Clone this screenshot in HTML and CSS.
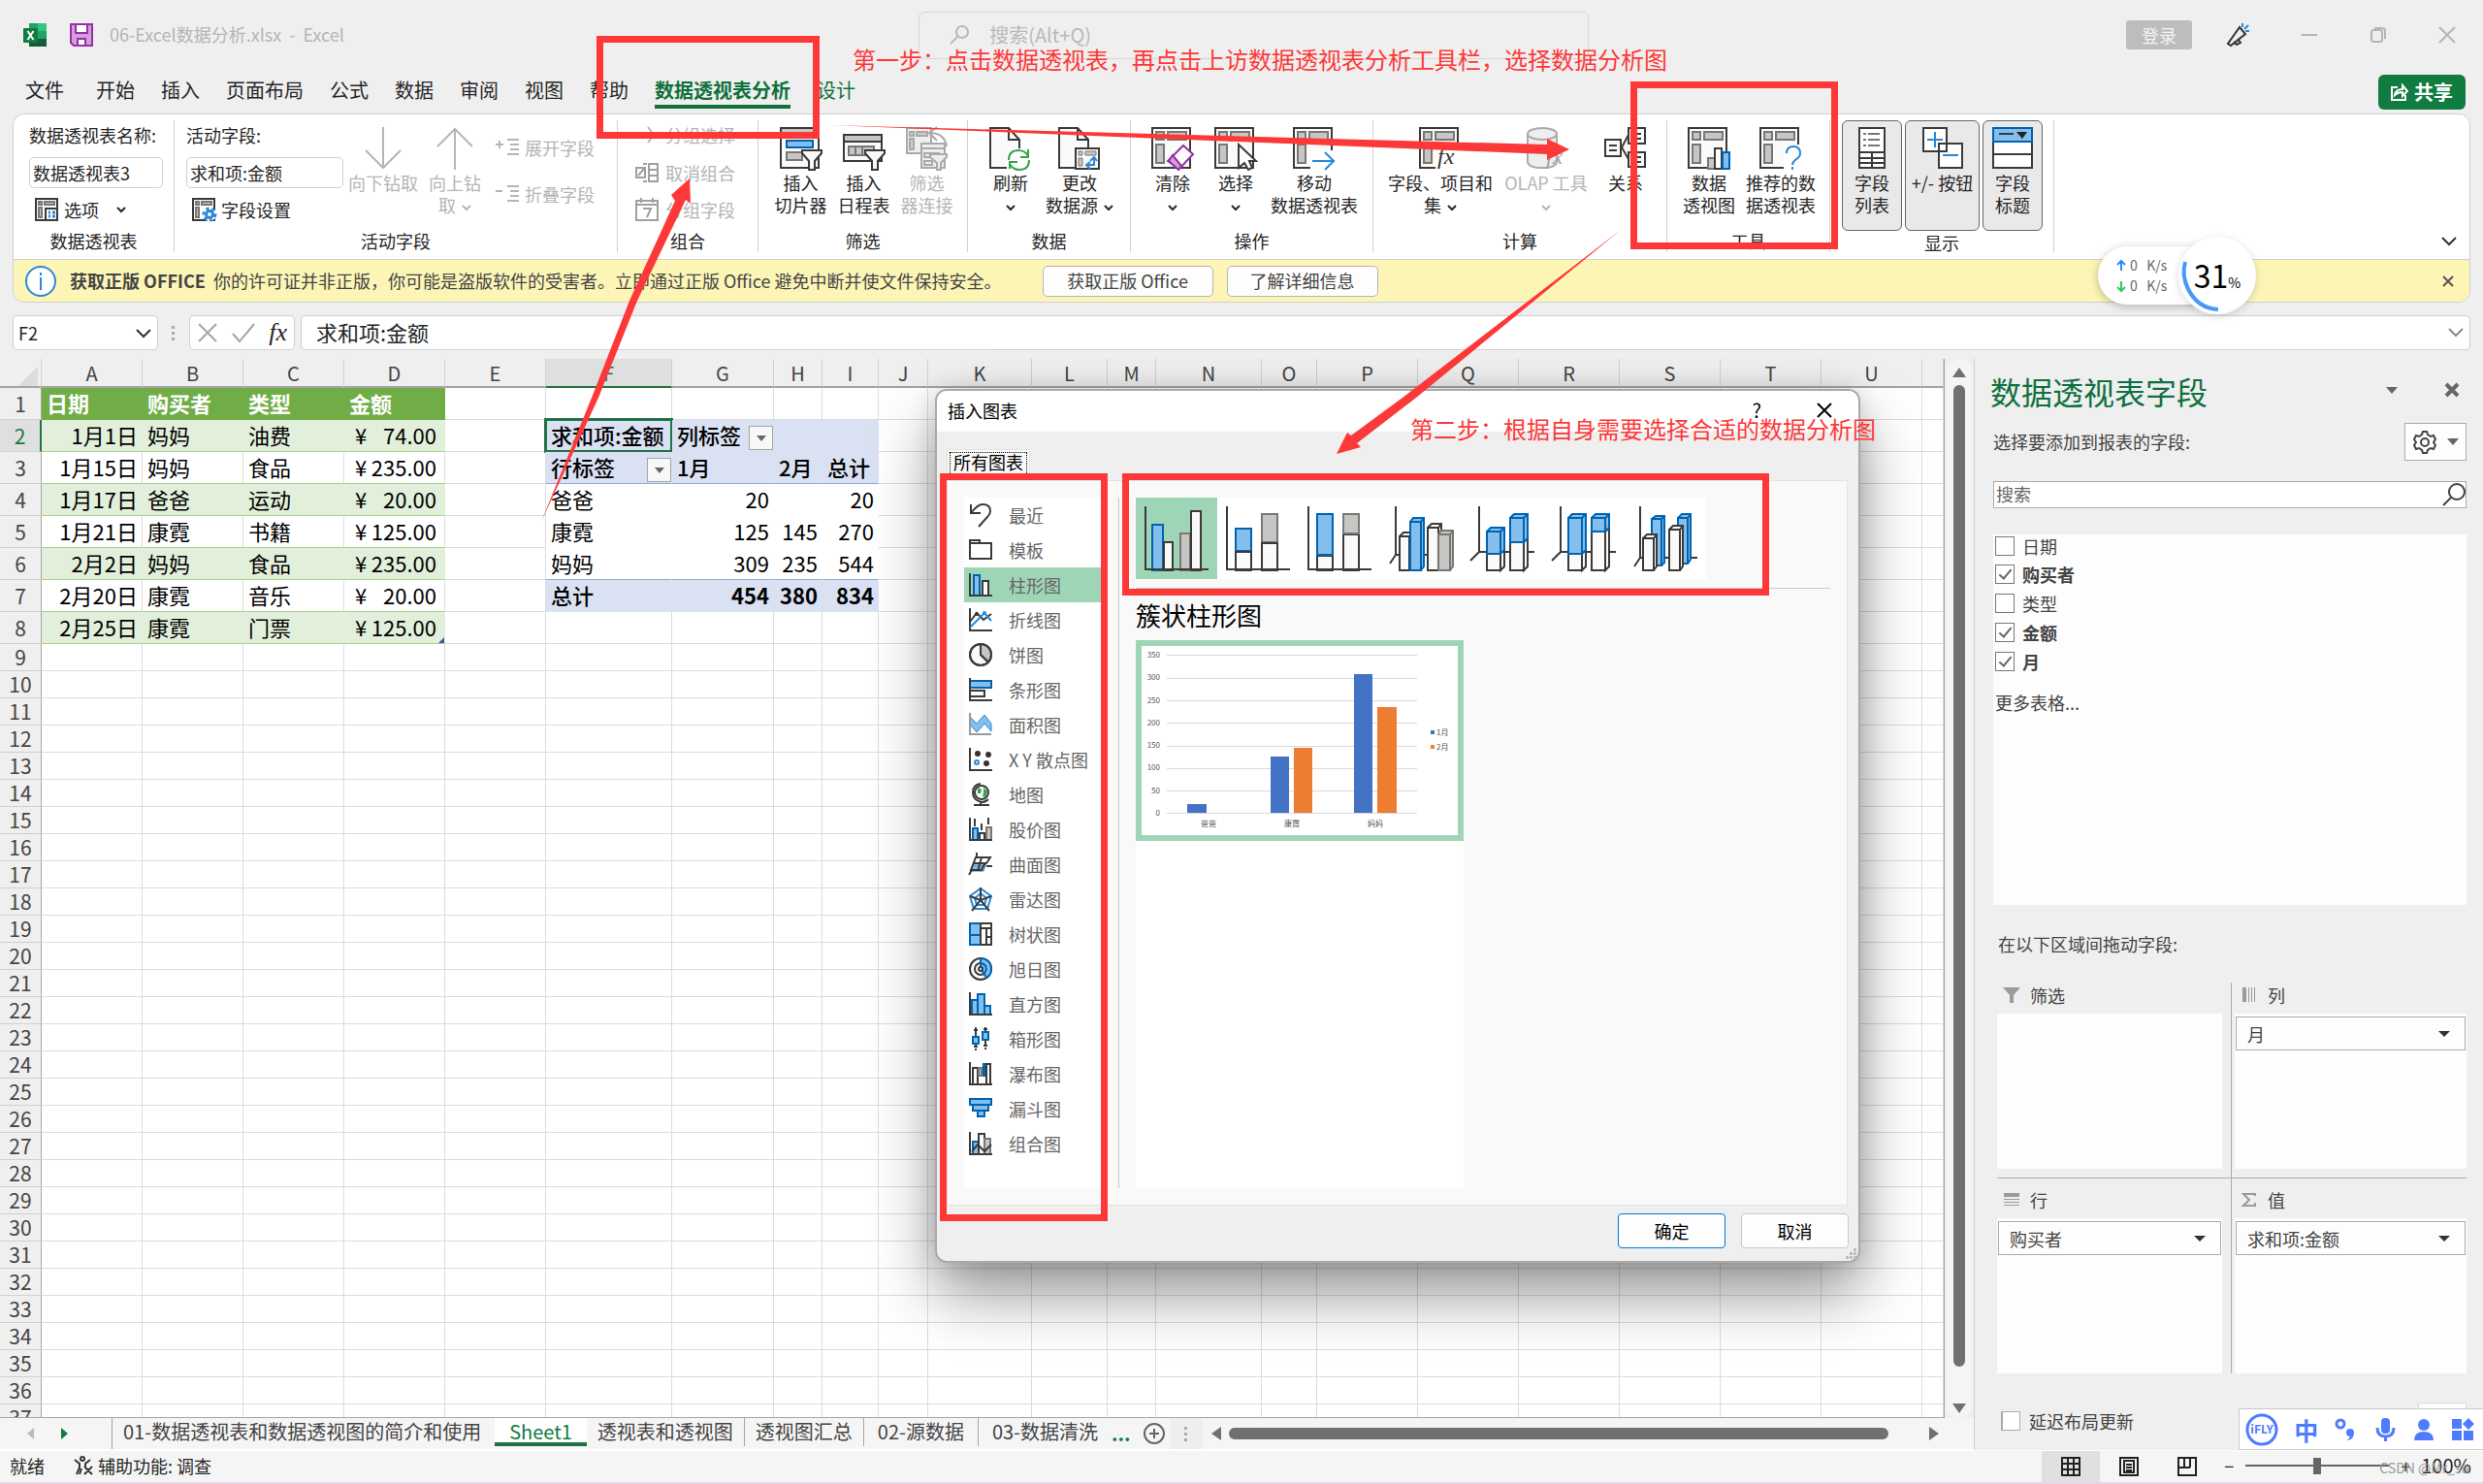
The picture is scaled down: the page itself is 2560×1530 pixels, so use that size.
FILE: index.html
```html
<!DOCTYPE html>
<html lang="zh-CN">
<head>
<meta charset="utf-8">
<title>06-Excel数据分析.xlsx - Excel</title>
<link rel="stylesheet" href="styles.css">
</head>
<body>
<svg class="defs" aria-hidden="true">
  <symbol id="pivot" viewBox="0 0 44 44"><path d="M1 1h39v41H1z" fill="#fafafa" stroke="#3b3a39" stroke-width="2"/><path d="M5 5h8v8H5zM17 5h19v8H17zM5 18h8v19H5z" fill="#c8c6c4" stroke="#797774" stroke-width="2"/></symbol>
  <symbol id="chev" viewBox="0 0 10 10"><path d="M1 3l4 4 4-4" fill="none" stroke="currentColor" stroke-width="2"/></symbol>
  <symbol id="page" viewBox="0 0 44 44"><path d="M1 1h19l11 12v29H1z" fill="#fafafa" stroke="#3b3a39" stroke-width="2"/><path d="M20 1v12h11" fill="none" stroke="#3b3a39" stroke-width="2"/></symbol>
</svg>

<header class="titlebar">
  <svg class="i24" viewBox="0 0 24 24"><path d="M6 0h18v24H6z" fill="#21a366"/><path d="M15 0h9v8h-9z" fill="#33c481"/><path d="M6 8h9v8H6z" fill="#107c41"/><path d="M6 16h18v8H6z" fill="#185c37"/><rect y="5" width="15" height="15" rx="1" fill="#107c41"/><path d="M4.500 8l6 9M10.500 8l-6 9" stroke="#fff" stroke-width="2"/></svg>
  <svg class="i24 save" viewBox="0 0 24 24"><path d="M1 1h22v22H4l-3-3z" fill="#d59dde" stroke="#9332a3" stroke-width="2"/><path d="M6 1h12v9H6zM8 16h8v7H8z" fill="#fff" stroke="#9332a3" stroke-width="2"/></svg>
  <span class="doc-name">06-Excel数据分析.xlsx &nbsp;- &nbsp;Excel</span>
  <label class="top-search"><svg class="i20" viewBox="0 0 20 20" fill="none" stroke="#b9b9b9" stroke-width="2"><circle cx="13" cy="7" r="6"/><path d="M9 11l-8 8"/></svg><input type="text" placeholder="搜索(Alt+Q)" aria-label="搜索"></label>
  <div class="window-tools">
    <button class="login">登录</button>
    <button class="plain" aria-label="即将推出"><svg class="i24" viewBox="0 0 24 24" fill="none" stroke="#333" stroke-width="2"><path d="M14 4l-12 17 3 2 15-12zM12 16l3 4 -4 2-3-3"/><path d="M17 4V0M19 6l4-4M20 8h4" stroke="#2b88d8"/></svg></button>
    <button class="plain" aria-label="最小化"><svg class="i18" viewBox="0 0 18 18" stroke="#b5b5b5" stroke-width="2"><path d="M1 9h16"/></svg></button>
    <button class="plain" aria-label="还原"><svg class="i18" viewBox="0 0 18 18" fill="none" stroke="#b5b5b5" stroke-width="2"><rect x="2" y="4" width="11" height="12" rx="2"/><path d="M5 2h8q3 0 3 3v8"/></svg></button>
    <button class="plain" aria-label="关闭"><svg class="i18" viewBox="0 0 18 18" stroke="#b5b5b5" stroke-width="2"><path d="M1 1l16 16M17 1L1 17"/></svg></button>
  </div>
</header>

<nav class="tabs">
  <a href="#">文件</a><a href="#">开始</a><a href="#">插入</a><a href="#">页面布局</a><a href="#">公式</a><a href="#">数据</a><a href="#">审阅</a><a href="#">视图</a><a href="#">帮助</a><a href="#" class="active">数据透视表分析</a><a href="#" class="context">设计</a>
  <button class="share"><svg class="i18" viewBox="0 0 18 18" fill="none" stroke="#fff" stroke-width="2"><path d="M7 4H1v13h14v-5M4 12q1-6 8-6V2l5 6-5 5V9Q7 9 4 12z"/></svg>共享</button>
</nav>

<section class="ribbon">
  <div class="groups">
    <div class="group g-name">
      <div class="tools stack">
        <label for="ptname">数据透视表名称:</label>
        <input id="ptname" type="text" value="数据透视表3">
        <button class="small"><svg class="i24" viewBox="0 0 24 24" fill="#fafafa" stroke="#3b3a39" stroke-width="2"><path d="M1 1h22v22H1z"/><path d="M4 4h3v3H4zM10 4h10v3H10zM4 10h3v10H4z" fill="#c8c6c4" stroke="#797774"/><path d="M11 11h12v12H11z"/><path d="M14 15h2M18 15h3M14 19h2M18 19h3" stroke="#2b88d8" stroke-width="3"/></svg>选项<svg class="chev gap"><use href="#chev"/></svg></button>
      </div>
      <div class="caption">数据透视表</div>
    </div>
    <div class="group g-active">
      <div class="tools">
        <div class="stack field">
          <label for="actfield">活动字段:</label>
          <input id="actfield" type="text" value="求和项:金额">
          <button class="small"><svg class="i24" viewBox="0 0 24 24" fill="#fafafa" stroke="#3b3a39" stroke-width="2"><path d="M1 1h22v22H1z"/><path d="M4 4h3v3H4zM10 4h10v3H10zM4 10h3v10H4z" fill="#c8c6c4" stroke="#797774"/><circle cx="18" cy="17" r="6" fill="#2b88d8" stroke="#fff"/><circle cx="18" cy="17" r="6" fill="none" stroke="#2b88d8" stroke-width="3" stroke-dasharray="3 3"/><circle cx="18" cy="17" r="2" fill="#fff" stroke="none"/></svg>字段设置</button>
        </div>
        <button class="big w74" disabled><svg class="i42" viewBox="0 0 44 44" fill="none" stroke="#b5b5b5" stroke-width="2"><path d="M22 0v42M4 24l18 18 18-18"/></svg><span>向下钻取</span></button>
        <button class="big w74" disabled><svg class="i42" viewBox="0 0 44 44" fill="none" stroke="#b5b5b5" stroke-width="2"><path d="M22 44V2M4 20L22 2l18 18"/></svg><span>向上钻<br>取<svg class="chev"><use href="#chev"/></svg></span></button>
        <div class="expand">
          <button class="small" disabled><svg class="i24" viewBox="0 0 24 24" stroke="#b5b5b5" stroke-width="2"><path d="M0 9h8M4 5v8M12 4h12M15 9h9M15 14h9M12 19h12"/></svg>展开字段</button>
          <button class="small" disabled><svg class="i24" viewBox="0 0 24 24" stroke="#b5b5b5" stroke-width="2"><path d="M0 9h7M12 4h12M15 9h9M15 14h9M12 19h12"/></svg>折叠字段</button>
        </div>
      </div>
      <div class="caption">活动字段</div>
    </div>
    <div class="group g-comb">
      <div class="tools stack">
        <button class="small" disabled><svg class="i24" viewBox="0 0 24 24" fill="none" stroke="#b5b5b5" stroke-width="2"><path d="M13 4l6 8-6 8"/></svg>分组选择</button>
        <button class="small" disabled><svg class="i24" viewBox="0 0 24 24" fill="none" stroke="#a0a0a0" stroke-width="2"><path d="M1 7h9v10H1zM3 15l6-7M8 3h4M8 21h4M14 3h9v18h-9zM14 9h9M14 15h9"/></svg>取消组合</button>
        <button class="small" disabled><svg class="i24" viewBox="0 0 24 24" fill="none" stroke="#a0a0a0" stroke-width="2"><path d="M1 3h22v20H1zM1 7h22M6 0v5M18 0v5M8 11h8l-4 9"/></svg>分组字段</button>
      </div>
      <div class="caption">组合</div>
    </div>
    <div class="group g-filter">
      <div class="tools">
        <button class="big w65"><svg class="i42" viewBox="0 0 44 44" fill="#fafafa" stroke="#3b3a39" stroke-width="2"><path d="M1 1h39v41H1z"/><path d="M2 2h37v7H2z" fill="#c8c6c4" stroke="none"/><path d="M1 10h39"/><path d="M7 14h27v7H7z" fill="#83beec" stroke="#0063b1"/><path d="M7 26h16v8H7z" fill="#c8c6c4" stroke="#797774"/><path d="M23 24h20v3l-7 8v9h-6v-9l-7-8z"/></svg><span>插入<br>切片器</span></button>
        <button class="big w65"><svg class="i42" viewBox="0 0 44 44" fill="#fafafa" stroke="#3b3a39" stroke-width="2"><path d="M1 8h39v27H1z"/><path d="M2 9h37v5H2z" fill="#c8c6c4" stroke="none"/><path d="M1 15h39"/><path d="M6 20h7v9H6zM13 20h7v9h-7zM20 20h12v9H20z" fill="#c8c6c4" stroke="#797774"/><path d="M23 24h20v3l-7 8v9h-6v-9l-7-8z"/></svg><span>插入<br>日程表</span></button>
        <button class="big w65" disabled><svg class="i42" viewBox="0 0 44 44" fill="#eee" stroke="#a9a9a9" stroke-width="2"><path d="M1 1h25v26H1z"/><path d="M4 5h4v4H4zM11 5h11v4H11zM4 12h4v11H4z" fill="#ccc"/><path d="M24 6q16 0 18 14M32 0l-8 6 8 8" fill="none"/><path d="M16 17h24v25H16zM16 22h24M19 27h15v4H19zM19 35h8v4h-8z"/><path d="M25 28h17v3l-6 6v7h-4v-7l-7-6z"/></svg><span>筛选<br>器连接</span></button>
      </div>
      <div class="caption">筛选</div>
    </div>
    <div class="group g-data">
      <div class="tools">
        <button class="big w66"><svg class="i42" viewBox="0 0 44 44"><use href="#page"/><path d="M18 22h26v22H18z" fill="#fff"/><path d="M20 34q0-10 10-10 7 0 10 6M40 23v8h-8M41 34q0 10-10 10-7 0-10-6M21 43v-7h8" fill="none" stroke="#37a24b" stroke-width="2"/></svg><span>刷新<br><svg class="chev solo"><use href="#chev"/></svg></span></button>
        <button class="big w76"><svg class="i42" viewBox="0 0 44 44"><use href="#page"/><path d="M18 22h24v21H18z" fill="#fafafa" stroke="#3b3a39" stroke-width="2"/><path d="M21 25h4v4h-4zM28 25h11v4H28zM21 32h4v8h-4z" fill="#c8c6c4" stroke="#797774"/><path d="M30 39h7v-7M33 35l4-4 3 4M33 36l-4 3 4 4" fill="none" stroke="#2b88d8" stroke-width="2"/></svg><span>更改<br>数据源<svg class="chev"><use href="#chev"/></svg></span></button>
      </div>
      <div class="caption">数据</div>
    </div>
    <div class="group g-op">
      <div class="tools">
        <button class="big w64"><svg class="i42" viewBox="0 0 44 44"><use href="#pivot"/><path d="M33 19l10 9-14 15-12-8z" fill="#fff" stroke="#9332a3" stroke-width="2"/><path d="M22 29l9 11-3 4-10-9z" fill="#d59dde" stroke="#9332a3" stroke-width="2"/></svg><span>清除<br><svg class="chev solo"><use href="#chev"/></svg></span></button>
        <button class="big w66"><svg class="i42" viewBox="0 0 44 44"><use href="#pivot"/><path d="M25 18v24l6-5 4 7 4-2-3-7h7z" fill="#fff" stroke="#3b3a39" stroke-width="2"/></svg><span>选择<br><svg class="chev solo"><use href="#chev"/></svg></span></button>
        <button class="big w96"><svg class="i42" viewBox="0 0 44 44"><use href="#pivot"/><path d="M18 24h26v20H18z" fill="#fff"/><path d="M20 35h23M33 26l9 9-9 9" fill="none" stroke="#2b88d8" stroke-width="2"/></svg><span>移动<br>数据透视表</span></button>
      </div>
      <div class="caption">操作</div>
    </div>
    <div class="group g-calc">
      <div class="tools">
        <button class="big w116"><svg class="i42" viewBox="0 0 44 44"><use href="#pivot"/><path d="M17 24h27v20H17z" fill="#fff"/><text x="19" y="38" class="fx">fx</text></svg><span>字段、项目和<br>集<svg class="chev"><use href="#chev"/></svg></span></button>
        <button class="big w102" disabled><svg class="i42" viewBox="0 0 44 44" fill="#eee" stroke="#a9a9a9" stroke-width="2"><path d="M3 7v28q0 7 15 7t15-7V7"/><ellipse cx="18" cy="7" rx="15" ry="6"/><text x="22" y="38" class="fx dim">fx</text></svg><span>OLAP 工具<br><svg class="chev solo"><use href="#chev"/></svg></span></button>
        <button class="big w62"><svg class="i42" viewBox="0 0 44 44" fill="#fafafa" stroke="#3b3a39" stroke-width="2"><path d="M1 13h16v17H1zM25 1h17v16H25zM25 26h17v15H25zM5 19h8M5 24h8M29 7h9M29 12h9M29 31h9M29 36h9M25 8l-7 13 7 12" /></svg><span>关系</span></button>
      </div>
      <div class="caption">计算</div>
    </div>
    <div class="group g-tool">
      <div class="tools">
        <button class="big w66"><svg class="i42" viewBox="0 0 44 44"><use href="#pivot"/><path d="M21 32h7v11h-7z" fill="#c8c6c4" stroke="#797774" stroke-width="2"/><path d="M28 22h7v21h-7z" fill="#fff" stroke="#3b3a39" stroke-width="2"/><path d="M36 26h7v17h-7z" fill="#83beec" stroke="#0063b1" stroke-width="2"/></svg><span>数据<br>透视图</span></button>
        <button class="big w82"><svg class="i42" viewBox="0 0 44 44"><use href="#pivot"/><path d="M25 18h19v26H25z" fill="#fff"/><path d="M28 27q0-7 7-7 7 0 7 7 0 4-4 6-4 3-4 6M34 41v3" fill="none" stroke="#2b88d8" stroke-width="2"/></svg><span>推荐的数<br>据透视表</span></button>
      </div>
      <div class="caption">工具</div>
    </div>
    <div class="group g-show">
      <div class="tools">
        <button class="big toggle w62" aria-pressed="true"><svg class="i42" viewBox="0 0 44 44" fill="#fff" stroke="#3b3a39" stroke-width="2"><path d="M9 1h26v41H9zM9 26h26M9 32h26M9 37h26M22 26v16"/><path d="M13 7h3M18 7h12M13 13h3M18 13h12M13 19h3M18 19h12" stroke="#797774"/></svg><span>字段<br>列表</span></button>
        <button class="big toggle w77" aria-pressed="true"><svg class="i42" viewBox="0 0 44 44" fill="#fff" stroke="#3b3a39" stroke-width="2"><path d="M2 1h24v24H2zM18 17h24v25H18z"/><path d="M6 13h16M14 5v16M22 29h16" stroke="#2b88d8"/></svg><span>+/- 按钮</span></button>
        <button class="big toggle w62" aria-pressed="true"><svg class="i42" viewBox="0 0 44 44" fill="#fff" stroke="#3b3a39" stroke-width="2"><path d="M2 15h40v27H2zM2 28h40"/><path d="M2 1h40v14H2z" fill="#83beec" stroke="#0063b1"/><path d="M8 7h15"/><path d="M26 5h11l-5 7z" fill="#222" stroke="none"/></svg><span>字段<br>标题</span></button>
      </div>
      <div class="caption">显示</div>
    </div>
    <button class="collapse" aria-label="折叠功能区"><svg class="i18" viewBox="0 0 18 18" fill="none" stroke="#333" stroke-width="2"><path d="M2 6l7 7 7-7"/></svg></button>
  </div>
  <div class="notice">
    <svg class="i32" viewBox="0 0 32 32" fill="#fff" stroke="#2b88d8" stroke-width="2"><circle cx="16" cy="16" r="15"/><path d="M16 12v13M16 7v3"/></svg>
    <span><b>获取正版 OFFICE</b>&nbsp; 你的许可证并非正版，你可能是盗版软件的受害者。立即通过正版 Office 避免中断并使文件保持安全。</span>
    <button class="get">获取正版 Office</button>
    <button class="more">了解详细信息</button>
    <button class="plain close" aria-label="关闭"><svg class="i12" viewBox="0 0 12 12" stroke="#555" stroke-width="2"><path d="M1 1l10 10M11 1L1 11"/></svg></button>
  </div>
</section>

<section class="formula-row">
  <div class="name-box"><input type="text" value="F2" aria-label="名称框"><svg class="i18" viewBox="0 0 18 18" fill="none" stroke="#333" stroke-width="2"><path d="M2 6l7 7 7-7"/></svg></div>
  <span class="dots"></span>
  <div class="fx-box"><svg class="i20" viewBox="0 0 20 20" stroke="#a5a5a5" stroke-width="2"><path d="M1 1l18 18M19 1L1 19"/></svg><svg class="i24" viewBox="0 0 24 24" fill="none" stroke="#a5a5a5" stroke-width="2"><path d="M1 13l7 8L23 3"/></svg><i>fx</i></div>
  <div class="formula"><input type="text" value="求和项:金额" aria-label="编辑栏"><svg class="i18" viewBox="0 0 18 18" fill="none" stroke="#888" stroke-width="2"><path d="M2 6l7 7 7-7"/></svg></div>
</section>

<main class="work">
  <section class="book">
    <div class="grid-row">
      <div class="sheet"><table id="grid"></table></div>
      <div class="vscroll"><i class="up"></i><i class="thumb"></i><i class="down"></i></div>
    </div>
    <div class="sheet-bar">
      <i class="prev"></i><i class="next"></i>
      <nav class="sheets"><a href="#">01-数据透视表和数据透视图的简介和使用</a><a href="#" class="current">Sheet1</a><a href="#">透视表和透视图</a><a href="#">透视图汇总</a><a href="#" class="wide">02-源数据</a><a href="#" class="wide">03-数据清洗</a></nav>
      <b class="more-sheets">...</b>
      <button class="plain" aria-label="新工作表"><svg class="i24" viewBox="0 0 24 24" fill="none" stroke="#666" stroke-width="2"><circle cx="12" cy="12" r="10"/><path d="M12 7v10M7 12h10"/></svg></button>
      <span class="splitter"><i class="dots"></i></span>
      <div class="hscroll"><i class="left"></i><i class="thumb"></i><i class="right"></i></div>
    </div>
  </section>

  <aside class="pane">
    <div class="pane-head"><h2>数据透视表字段</h2><i class="tri"></i><button class="plain" aria-label="关闭窗格"><svg class="i16" viewBox="0 0 16 16" stroke="#666" stroke-width="4"><path d="M2 2l12 12M14 2L2 14"/></svg></button></div>
    <div class="pane-pick"><span>选择要添加到报表的字段:</span><button class="gear" aria-label="工具"><svg class="i24" viewBox="0 0 24 24" fill="none" stroke="#444" stroke-width="2"><path d="M9 4l1-3h4l1 3 3 2 3-1 2 4-2 3 2 3-2 4-3-1-3 2-1 3h-4l-1-3-3-2-3 1-2-4 2-3-2-3 2-4 3 1z"/><circle cx="12" cy="12" r="4"/></svg><i class="tri"></i></button></div>
    <label class="pane-search"><input type="text" placeholder="搜索" aria-label="搜索字段"><svg class="i24" viewBox="0 0 24 24" fill="none" stroke="#444" stroke-width="2"><circle cx="15" cy="9" r="8"/><path d="M9 15l-8 8"/></svg></label>
    <div class="fields">
      <label><input type="checkbox">日期</label>
      <label class="on"><input type="checkbox" checked>购买者</label>
      <label><input type="checkbox">类型</label>
      <label class="on"><input type="checkbox" checked>金额</label>
      <label class="on"><input type="checkbox" checked>月</label>
      <a href="#">更多表格...</a>
    </div>
    <p class="drag-hint">在以下区域间拖动字段:</p>
    <div class="areas">
      <div class="area"><h3><svg class="i20" viewBox="0 0 20 20" fill="#9b9b9b"><path d="M1 2h18l-7 8v8H8v-8z"/></svg>筛选</h3><div class="drop"></div></div>
      <div class="area right"><h3><svg class="i16" viewBox="0 0 16 16" fill="#9b9b9b"><path d="M1 0h4v15H1zM7 0h1v15H7zM10 0h1v15h-1zM13 0h1v15h-1z"/></svg>列</h3><div class="drop"><select aria-label="列"><option>月</option></select></div></div>
      <div class="area lower"><h3><svg class="i20" viewBox="0 0 20 20" fill="#9b9b9b"><path d="M2 3h16v4H2zM2 9h16v1H2zM2 12h16v1H2zM2 15h16v1H2z"/></svg>行</h3><div class="drop"><select aria-label="行"><option>购买者</option></select></div></div>
      <div class="area right lower"><h3><svg class="i16" viewBox="0 0 16 16" fill="none" stroke="#9b9b9b" stroke-width="2"><path d="M14 4V2H2l6 6-6 6h12v-3"/></svg>值</h3><div class="drop"><select aria-label="值"><option>求和项:金额</option></select></div></div>
    </div>
    <div class="defer"><label><input type="checkbox">延迟布局更新</label><button aria-label="更新"></button></div>
  </aside>
</main>

<footer class="status">
  <span>就绪</span>
  <svg class="i20 access" viewBox="0 0 20 20" fill="none" stroke="#333" stroke-width="2"><circle cx="9" cy="3" r="2"/><path d="M1 4l5 4v4l-3 7M17 4l-5 4v3M8 13l-2 6M11 11l8 8M19 11l-8 8"/></svg>
  <span>辅助功能: 调查</span>
  <div class="views">
    <button class="sel" aria-label="普通"><svg class="i20" viewBox="0 0 20 20" fill="none" stroke="#222" stroke-width="2"><path d="M1 1h18v18H1zM1 7h18M1 13h18M7 1v18M13 1v18"/></svg></button>
    <button aria-label="页面布局"><svg class="i20" viewBox="0 0 20 20" fill="none" stroke="#222" stroke-width="2"><path d="M1 1h18v18H1zM5 4h10v12H5zM7 8h6M7 11h6M7 14h6"/></svg></button>
    <button aria-label="分页预览"><svg class="i20" viewBox="0 0 20 20" fill="none" stroke="#222" stroke-width="2"><path d="M1 1h18v18H1zM7 1v10M13 1v10M1 11h12"/></svg></button>
  </div>
  <span class="zoom-sign">−</span><input class="zoom" type="range" min="10" max="190" value="100" aria-label="缩放"><span class="zoom-sign">+</span><span class="pct">100%</span>
</footer>

<section class="dialog" role="dialog" aria-label="插入图表">
  <div class="dlg-title"><span>插入图表</span><span class="help">?</span><svg class="i16" viewBox="0 0 16 16" stroke="#000" stroke-width="2"><path d="M1 1l14 14M15 1L1 15"/></svg></div>
  <div class="dlg-tab"><button>所有图表</button></div>
  <div class="dlg-body">
    <ul class="kinds">
      <li><svg viewBox="0 0 24 24"><path class="k" d="M2 1v9h10M2 10Q9 1 14 1q8 0 8 7 0 3-3 6l-9 10"/></svg>最近</li>
      <li><svg viewBox="0 0 24 24"><path class="k" d="M1 2h10v3h12v16H1zM1 5h10"/></svg>模板</li>
      <li class="sel"><svg viewBox="0 0 24 24"><path class="b" d="M5 2h6v21H5z"/><path class="w" d="M14 8h6v15h-6z"/><path class="k" d="M1 0v23h23"/></svg>柱形图</li>
      <li><svg viewBox="0 0 24 24"><path class="k" d="M1 0v23h23M1 14l7-9 7 7 8-6"/><path class="l" d="M1 20L16 5l7 8"/><circle cx="8" cy="6" r="2"/><circle class="dot" cx="16" cy="5" r="2"/></svg>折线图</li>
      <li><svg viewBox="0 0 24 24"><circle class="w" cx="12" cy="12" r="11"/><path class="g" d="M12 1v11l8 7Q23 16 23 12 23 2 12 1z"/><path class="k" d="M12 1v11l8 8"/><circle class="k" cx="12" cy="12" r="11"/></svg>饼图</li>
      <li><svg viewBox="0 0 24 24"><path class="b" d="M1 3h22v7H1z"/><path class="w" d="M1 13h15v6H1z"/><path class="k" d="M1 0v23h23"/></svg>条形图</li>
      <li><svg viewBox="0 0 24 24"><path class="bl" d="M1 4l7 7 8-9 7 9v8l-7-8-8 9-7-8z"/><path class="gl" d="M1 0v22h22"/></svg>面积图</li>
      <li><svg viewBox="0 0 24 24"><path class="k" d="M1 0v23h23"/><circle cx="9" cy="6" r="3"/><circle cx="20" cy="7" r="3"/><circle cx="18" cy="16" r="3"/><circle class="l" cx="8" cy="15" r="2"/></svg>X Y 散点图</li>
      <li><svg viewBox="0 0 24 24"><circle class="w" cx="13" cy="10" r="7"/><path d="M9 5l4 2-1 4-3 0zM15 5l4 4-2 6-3-1 1-4z" fill="#37a24b"/><path class="k" d="M12 1Q4 2 4 10t9 10q4 0 7-3M12 20v3M5 23h16"/></svg>地图</li>
      <li><svg viewBox="0 0 24 24"><path class="b" d="M4 11h5v12H4z"/><path class="w" d="M11 16h5v7h-5z"/><path class="g" d="M18 10h5v13h-5z"/><path class="k" d="M1 0v23h23M6 1v8M13 6v7M20 0v7"/></svg>股价图</li>
      <li><svg viewBox="0 0 24 24"><path class="bl" d="M4 13h13l-2 6H2z"/><path class="k" d="M8 0v6M7 5h15l-4 6q-3 1-5 7H2zM13 5L9 19M5 11h12M18 14h6M3 18l-3 5"/></svg>曲面图</li>
      <li><svg viewBox="0 0 24 24"><path class="l" d="M12 1l11 8-4 13H5L1 9zM12 6l6 5-2 7H8l-2-7z"/><path class="k" d="M12 0v13L3 24M12 13l9 11M12 13L1 9M12 13l11-4"/></svg>雷达图</li>
      <li><svg viewBox="0 0 24 24"><path class="b" d="M1 1h11v12H1zM1 13h11v10H1z"/><path class="k" d="M12 1h11v22H12zM12 6h11M18 6v17M18 15h5"/></svg>树状图</li>
      <li><svg viewBox="0 0 24 24"><circle class="w" cx="12" cy="12" r="11"/><circle class="k" cx="12" cy="12" r="6"/><path class="b" d="M12 1q11 1 11 11 0 6-5 9l-6-9zM12 6q6 1 6 6l-2 5"/><circle class="w" cx="12" cy="12" r="2"/></svg>旭日图</li>
      <li><svg viewBox="0 0 24 24"><path class="b" d="M3 8h6v15H3zM9 2h7v21H9zM16 14h6v9h-6z"/><path class="k" d="M1 0v23h23"/></svg>直方图</li>
      <li><svg viewBox="0 0 24 24"><path class="k" d="M7 0v2M5 3h4M7 3v17M5 20h4M7 22v2M17 0v19M15 2h4M15 19h4M17 21v2"/><path class="b" d="M4 10h6v7H4zM14 5h6v8h-6z"/></svg>箱形图</li>
      <li><svg viewBox="0 0 24 24"><path class="w" d="M4 6h5v17H4zM18 2h4v21h-4z"/><path class="g" d="M10 6h3v8h-3z"/><path class="b" d="M15 2h1v12h-1z"/><path class="k" d="M1 0v23h23"/></svg>瀑布图</li>
      <li><svg viewBox="0 0 24 24"><path class="b" d="M1 2h22v6H1zM4 8h16v6H4zM9 14h7v6H9z"/></svg>漏斗图</li>
      <li><svg viewBox="0 0 24 24"><path class="b" d="M4 10h6v13H4z"/><path class="w" d="M10 2h6v21h-6z"/><path class="g" d="M16 7h6v16h-6z"/><path class="k" d="M1 0v23h23M3 20l6-7 7 7 7-7"/></svg>组合图</li>
    </ul>
    <div class="detail">
      <div class="subtypes">
        <button class="sel" aria-label="簇状柱形图"><svg viewBox="0 0 84 84"><path class="b" d="M17 28h11v47H17z"/><path class="w" d="M29 46h9v29h-9z"/><path class="g" d="M46 37h10v38H46z"/><path class="w" d="M57 14h10v61H57z"/><path class="k" d="M10 9v65h65"/></svg></button>
        <button aria-label="堆积柱形图"><svg viewBox="0 0 84 84"><path class="b" d="M19 32h16v23H19z"/><path class="w" d="M19 56h16v19H19z"/><path class="g" d="M46 17h16v29H46z"/><path class="w" d="M46 47h16v28H46z"/><path class="k" d="M10 9v65h65"/></svg></button>
        <button aria-label="百分比堆积柱形图"><svg viewBox="0 0 84 84"><path class="w" d="M19 60h16v15H19z"/><path class="b" d="M19 17h16v42H19z"/><path class="w" d="M46 38h16v37H46z"/><path class="g" d="M46 17h16v20H46z"/><path class="k" d="M10 9v65h65"/></svg></button>
        <button aria-label="三维簇状柱形图"><svg viewBox="0 0 84 84"><path class="k" d="M16 9v50l-6 9M16 59h60"/><path class="w" d="M20 40h10v35H20zl4-4h10v35l-4 4M30 40l4-4"/><path class="b" d="M31 25h11v50H31zl3-4h11v50l-3 4M42 25l3-4"/><path class="w" d="M49 31h11v44H49zl4-4h10v44l-3 4M60 31l3-4"/><path class="g" d="M60 38h12v37H60zl3-4h12v37l-3 4M72 38l3-4"/></svg></button>
        <button aria-label="三维堆积柱形图"><svg viewBox="0 0 84 84"><path class="k" d="M18 9v47l-9 9M18 56h57"/><path class="w" d="M26 57h14v18H26zM40 57l4-4v18l-4 4zM50 45h14v30H50zM64 45l4-4v30l-4 4z"/><path class="b" d="M26 35h14v23H26zl4-4h14v23l-4 4M40 35l4-4M50 21h14v25H50zl4-4h14v25l-4 4M64 21l4-4"/></svg></button>
        <button aria-label="三维百分比堆积柱形图"><svg viewBox="0 0 84 84"><path class="k" d="M18 9v47l-9 9M18 56h57"/><path class="w" d="M26 57h14v18H26zM40 57l4-4v18l-4 4zM50 35h14v40H50zM64 35l4-4v40l-4 4z"/><path class="b" d="M26 21h14v37H26zl4-4h14v37l-4 4M40 21l4-4M50 21h14v14H50zl4-4h14v14l-4 4M64 21l4-4"/></svg></button>
        <button aria-label="三维柱形图"><svg viewBox="0 0 84 84"><path class="k" d="M16 9v53l-6 9M16 62h59"/><path class="b" d="M28 22h10v48H28zl4-3h9v48l-3 3M38 22l3-3M55 21h10v47H55zl4-4h9v47l-3 4M65 21l3-4"/><path class="w" d="M19 42h11v33H19zl4-4h10v33l-3 4M30 42l3-4M46 33h11v42H46zl4-4h10v42l-3 4M57 33l3-4"/></svg></button>
      </div>
      <h3>簇状柱形图</h3>
      <div class="preview">
        <svg class="chart" viewBox="-1 -1 326 195">
          <path d="M25 8.500h258M25 32.500h258M25 55.500h258M25 78.500h258M25 102.500h258M25 125.500h258M25 148.500h258M25 171.500h258" stroke="#d9d9d9"/>
          <path d="M46 162h20v9H46zM132 113h19v58h-19zM218 28h19v143h-19zM297 86h4v4h-4z" fill="#4472c4"/>
          <path d="M156 104h19v67h-19zM242 62h20v109h-20zM297 101h4v4h-4z" fill="#ed7d31"/>
          <g class="axis"><text x="18" y="11">350</text><text x="18" y="34">300</text><text x="18" y="58">250</text><text x="18" y="81">200</text><text x="18" y="104">150</text><text x="18" y="127">100</text><text x="18" y="151">50</text><text x="18" y="174">0</text></g>
          <g class="cats"><text x="68" y="185">爸爸</text><text x="154" y="185">康霓</text><text x="240" y="185">妈妈</text></g>
          <text x="303" y="91">1月</text><text x="303" y="106">2月</text>
        </svg>
      </div>
    </div>
  </div>
  <div class="dlg-actions"><button class="ok">确定</button><button>取消</button></div>
  <svg class="grip" viewBox="0 0 12 12" fill="#bbb"><path d="M9 0h3v3H9zM9 4h3v3H9zM5 4h3v3H5zM9 8h3v3H9zM5 8h3v3H5zM1 8h3v3H1z"/></svg>
</section>

<div class="netspeed"><div class="rates"><span><svg class="i12" viewBox="0 0 12 12" fill="none" stroke="#2b88ff" stroke-width="2"><path d="M6 11V1M2 5l4-4 4 4"/></svg>0 &nbsp;&nbsp;K/s</span><span><svg class="i12" viewBox="0 0 12 12" fill="none" stroke="#2ecc5a" stroke-width="2"><path d="M6 1v10M2 7l4 4 4-4"/></svg>0 &nbsp;&nbsp;K/s</span></div><div class="ball"><svg viewBox="0 0 80 80" fill="none" stroke="#4499fa" stroke-width="4"><path d="M7 26Q3 40 10 54 20 74 41 75"/></svg><b>31</b><small>%</small></div></div>

<div class="ime">
  <svg viewBox="0 0 34 34"><circle cx="17" cy="17" r="15" fill="none" stroke="#4f7cff" stroke-width="3"/><text x="17" y="21" class="ifly">iFLY</text></svg>
  <b>中</b>
  <svg viewBox="0 0 24 24" fill="#4f7cff"><circle cx="7" cy="6" r="4" fill="none" stroke="#4f7cff" stroke-width="3"/><path d="M17 11a4 4 0 1 0 0 8q-1 2-3 4 7-1 7-8 0-4-4-4z"/></svg>
  <svg viewBox="0 0 24 24" fill="#4f7cff"><rect x="8" y="0" width="9" height="16" rx="4"/><path d="M4 10q0 9 8.500 9T21 10M12.500 19v5" fill="none" stroke="#4f7cff" stroke-width="3"/></svg>
  <svg viewBox="0 0 24 24" fill="#4f7cff"><circle cx="12" cy="7" r="6"/><path d="M2 23q0-9 10-9t10 9z"/></svg>
  <svg viewBox="0 0 24 24" fill="#4f7cff"><path d="M1 1h10v10H1zM18 0l6 6-6 6-6-6zM1 13h10v10H1zM13 13h10v10H13z"/></svg>
</div>

<svg class="marks" viewBox="0 0 2560 1530" aria-hidden="true">
  <g fill="none" stroke="#fd3838" stroke-width="7"><path d="M618.500 40.500h223v99h-223zM1684.500 87.500h207v166h-207zM972.500 491.500h166v764h-166zM1160.500 491.500h660v119h-660z"/></g>
  <g fill="#fd3838"><path d="M558 538L610 410 649 310 696 207 692 201 711 184 712 210 707 206 657 310 617 410z"/><path d="M856 129L1595 149 1595 143 1618 154 1595 165 1595 159z"/><path d="M1671 237L1446 410 1393 449 1389 446 1378 468 1403 461 1399 457 1460 410z"/></g>
</svg>
<p class="note one">第一步：点击数据透视表，再点击上访数据透视表分析工具栏，选择数据分析图</p>
<p class="note two">第二步：根据自身需要选择合适的数据分析图</p>
<p class="watermark">CSDN @Mr_su</p>
<script src="script.js"></script>
</body>
</html>
```
FILE: styles.css
```css
* { box-sizing: border-box; }
body { margin: 0; height: 100vh; display: flex; flex-direction: column; overflow: hidden; position: relative; background: #efefef; color: #262626; font: 18px/24px "Noto Sans CJK SC", sans-serif; border-bottom: 2px solid #e8d6e2; }
button, input, select { font: inherit; color: inherit; margin: 0; padding: 0; border: 0; background: none; }
a { color: inherit; text-decoration: none; }
h2, h3, p, ul { margin: 0; padding: 0; font-weight: 400; }
svg { flex: none; display: block; overflow: visible; }
.defs { position: absolute; width: 0; height: 0; }
.i12 { width: 12px; height: 12px; }
.i16 { width: 16px; height: 16px; }
.i18 { width: 18px; height: 18px; }
.i20 { width: 20px; height: 20px; }
.i24 { width: 24px; height: 24px; }
.i32 { width: 32px; height: 32px; }
.i42 { width: 44px; height: 44px; }
.plain { display: flex; }

/* title bar */
.titlebar { display: flex; align-items: center; height: 72px; padding: 0 28px 0 24px; position: relative; color: #b5b5b5; font-size: 20px; }
.save { margin-left: 24px; }
.doc-name { margin-left: 17px; font-size: 18px; padding-bottom: 2px; }
.top-search { position: absolute; left: 37%; width: 27%; top: 12px; height: 49px; display: flex; align-items: center; gap: 21px; padding: 0 0 2px 31px; border: 1px solid #d6d6d6; border-radius: 6px; }
.top-search input::placeholder { color: #b9b9b9; }
.window-tools { margin-left: auto; display: flex; align-items: center; gap: 53px; }
.login { width: 68px; height: 30px; margin-right: -18px; background: #bdbdbd; color: #f3f3f3; font-size: 18px; border-radius: 3px; }

/* ribbon tabs */
.tabs { display: flex; align-items: center; height: 45px; padding: 0 18px 0 26px; gap: 27px; font-size: 20px; position: relative; }
.tabs a { height: 37px; line-height: 36px; border-bottom: 4px solid transparent; margin-bottom: 2px; }
.tabs a:first-child { margin-right: 6px; }
.tabs .active { color: #0f703b; font-weight: 700; border-color: #0f703b; }
.tabs .context { color: #0f703b; }
.share { margin-left: auto; display: flex; align-items: center; justify-content: center; gap: 6px; width: 90px; height: 36px; background: #107c41; color: #fff; font-weight: 700; border-radius: 6px; }

/* ribbon */
.ribbon { margin: 0 13px; border: 1px solid #cfcfcf; border-radius: 12px; overflow: hidden; background: #fff; }
.groups { display: flex; height: 149px; padding: 6px 0 7px; position: relative; }
.group { flex: none; display: flex; flex-direction: column; border-right: 1px solid #d0d0d0; }
.tools { display: flex; height: 116px; }
.caption { text-align: center; line-height: 24px; }
.g-name { width: 166px; } .g-active { width: 457px; } .g-comb { width: 145px; } .g-filter { width: 216px; }
.g-data { width: 168px; } .g-op { width: 250px; } .g-calc { width: 303px; } .g-tool { width: 168px; } .g-show { width: 231px; }
.g-name .stack { padding-left: 16px; }
.g-active .tools { padding-left: 12px; }
.g-comb .stack { padding-left: 18px; }
.g-filter .tools, .g-op .tools { padding-left: 11px; }
.g-data .tools, .g-calc .tools { padding-left: 11px; }
.g-tool .tools { padding-left: 10px; }
.g-show .tools { padding-left: 12px; gap: 3px; }
.stack { display: flex; flex-direction: column; justify-content: space-between; padding: 3px 0 8px; }
.stack input { height: 32px; width: 138px; padding: 0 3px; border: 1px solid #cfcfcf; border-radius: 5px; }
.field { width: 162px; flex: none; margin-right: 4px; }
.field input { width: 162px; }
.small { display: flex; align-items: center; gap: 6px; height: 24px; white-space: nowrap; }
.stack .small { padding-left: 6px; }
.g-comb .small { padding-left: 0; gap: 7px; }
.expand { display: flex; flex-direction: column; gap: 24px; padding: 16px 0 0 5px; }
.chev { width: 10px; height: 10px; display: inline-block; margin: 0 0 0 6px; }
.chev.gap { margin-left: 12px; }
.chev.solo { margin-left: 0; }
.big { display: flex; flex-direction: column; align-items: center; gap: 2px; padding: 7px 0 0; line-height: 23px; white-space: nowrap; flex: none; }
.w62 { width: 62px; } .w64 { width: 64px; } .w65 { width: 65px; } .w66 { width: 66px; } .w74 { width: 74px; } .w76 { width: 76px; }
.w77 { width: 77px; } .w82 { width: 82px; } .w96 { width: 96px; } .w102 { width: 102px; } .w116 { width: 116px; }
button:disabled { color: #b5b5b5; }
.toggle { background: #e9e9e9; border: 1px solid #666; border-radius: 6px; padding-top: 6px; height: 114px; }
.fx { font: italic 24px/26px "Liberation Serif", serif; fill: #333; stroke: none; }
.fx.dim { fill: #a5a5a5; }
.collapse { position: absolute; right: 12px; bottom: 10px; }
.notice { display: flex; align-items: center; height: 44px; padding: 0 16px 0 12px; gap: 14px; background: #fcf5b6; border-top: 1px solid #cfcfcf; color: #444; }
.notice span { padding-bottom: 2px; }
.notice button { height: 32px; }
.notice .get, .notice .more { width: 176px; padding-bottom: 2px; background: #fdfdfd; border: 1px solid #b5b5b5; border-radius: 5px; }
.notice .get { margin-left: 28px; }
.notice .more { width: 156px; }
.notice .close { margin-left: auto; align-items: center; }

/* formula bar */
.formula-row { display: flex; align-items: center; margin: 13px 13px 9px; height: 36px; flex: none; }
.name-box, .fx-box, .formula { display: flex; align-items: center; height: 36px; background: #fff; border: 1px solid #cfcfcf; border-radius: 5px; }
.name-box { width: 150px; padding: 0 5px; }
.name-box input { flex: 1; min-width: 0; }
.dots { width: 3px; height: 15px; margin: 0 15px 0 14px; background: repeating-linear-gradient(#aaa 0 3px, transparent 3px 6px); }
.fx-box { width: 109px; padding: 0 7px 0 8px; justify-content: space-between; }
.fx-box i { font: italic 26px/30px "Liberation Serif", serif; }
.formula { flex: 1; margin-left: 6px; padding: 0 5px 2px 15px; font-size: 22px; }
.formula input { flex: 1; }

/* worksheet */
.work { flex: 1; min-height: 0; display: flex; }
.book { flex: 1; min-width: 0; display: flex; flex-direction: column; }
.grid-row { flex: 1; min-height: 0; display: flex; }
.sheet { flex: 1; min-width: 0; overflow: hidden; border-right: 1px solid #a5a5a5; border-bottom: 1px solid #a5a5a5; }
#grid { width: 100%; table-layout: fixed; border-collapse: separate; border-spacing: 0; background: #fff; }
#grid th { background: #efefef; color: #444; font-weight: 400; font-size: 20px; padding: 0; text-align: center; border-right: 1px solid #d0d0d0; }
#grid thead th { height: 30px; line-height: 26px; padding-top: 2px; border-bottom: 2px solid #a5a5a5; }
#grid tbody th { font-size: 21px; padding-bottom: 1px; border-bottom: 1px solid #d0d0d0; border-right-color: #a5a5a5; }
#grid thead th.here { background: #dfdfdf; color: #217346; border-bottom-color: #217346; }
#grid tbody th.here { background: #dfdfdf; color: #217346; border-right: 2px solid #217346; }
#grid td { height: 28px; line-height: 24px; padding: 0 5px; font-size: 22px; color: #000; border-right: 1px solid #dcdcdc; border-bottom: 1px solid #dcdcdc; white-space: nowrap; position: relative; overflow: visible; }
#grid tr.tall td { height: 33px; padding-bottom: 3px; }
#grid td.num { text-align: right; padding: 0 4px 3px; }
#grid td.head { background: #70ad47; color: #fff; font-weight: 700; border-color: #70ad47; }
#grid td.green { border-bottom-color: #a9d08e; }
#grid td.band { background: #e2efda; border-right-color: #e2efda; }
#grid td.blue { background: #d9e1f2; border-color: #d9e1f2; font-weight: 500; }
#grid td.blank { border-color: #fff; }
#grid td.rule { border-bottom-color: #8ea9db; }
#grid td.strong { font-weight: 700; }
.money { display: flex; justify-content: space-between; padding: 0 3px 0 6px; }
.corner { margin: 6px 3px 0 auto; width: 0; height: 0; border: 10px solid #dcdcdc; border-top-color: transparent; border-left-color: transparent; }
.select-box { position: absolute; inset: -2px; border: 3px solid #217346; }
.drop-btn { position: absolute; right: 0; bottom: 1px; width: 25px; height: 25px; background: #f8f8f8; border: 1px solid #a5a5a5; display: flex; align-items: center; justify-content: center; }
.drop-btn::after { content: ""; border: 5px solid transparent; border-top: 6px solid #666; border-bottom: 0; }
.fill-mark { position: absolute; right: 0; bottom: 0; border: 3px solid #3f51b5; border-top-color: transparent; border-left-color: transparent; }
.vscroll { width: 26px; margin: 0 2px 0 2px; display: flex; flex-direction: column; align-items: center; background: #f5f5f5; border-radius: 12px; }
.vscroll .thumb { flex: 1; width: 12px; border-radius: 6px; background: #707070; margin: 8px 0 38px; }
.up, .down { border: 7px solid transparent; }
.up { border-bottom: 10px solid #707070; border-top: 0; margin-top: 9px; }
.down { border-top: 10px solid #707070; border-bottom: 0; margin-bottom: 5px; }
.sheet-bar { height: 33px; display: flex; align-items: center; background: #f5f5f5; font-size: 20px; color: #444; border-bottom: 1px solid #fff; }
.prev, .next { border: 6px solid transparent; }
.prev { margin-left: 28px; border-right: 7px solid #bbb; border-left: 0; }
.next { margin-left: 28px; border-left: 7px solid #107c41; border-right: 0; }
.sheets { display: flex; align-self: stretch; margin-left: 45px; border-left: 1px solid #a5a5a5; }
.sheets a { padding: 0 11px; line-height: 27px; border-right: 1px solid #a5a5a5; margin-bottom: 3px; white-space: nowrap; }
.sheets a:first-child, .sheets a:last-child { border-right: 0; }
.sheets a:first-child { padding-right: 14px; }
.sheets .wide { padding: 0 14px; }
.sheets .current { background: #fff; color: #107c41; padding: 0 15px; border-bottom: 4px solid #217346; border-right: 0; }
.more-sheets { color: #107c41; margin: 0 12px 0 0; }
.splitter { width: 33px; margin-left: 5px; align-self: stretch; display: flex; align-items: center; background: #eee; }
.hscroll { flex: 1; display: flex; align-items: center; padding: 0 36px 0 9px; }
.hscroll .thumb { flex: 1; height: 12px; border-radius: 6px; background: #707070; margin: 0 42px 0 8px; }
.left, .hscroll .right { border: 7px solid transparent; }
.left { border-right: 10px solid #707070; border-left: 0; }
.hscroll .right { border-left: 10px solid #707070; border-right: 0; }

/* field pane */
.pane { width: 525px; flex: none; padding: 0 17px 0 19px; display: flex; flex-direction: column; border-left: 1px solid #cfcfcf; color: #444; }
.pane-head { display: flex; align-items: center; height: 64px; }
.pane-head h2 { margin-left: -3px; margin-right: auto; font-size: 32px; line-height: 48px; padding-top: 2px; color: #107041; }
.tri { border: 6px solid transparent; border-top: 7px solid #666; border-bottom: 0; }
.pane-head button { margin: 0 7px 0 48px; }
.pane-pick { display: flex; align-items: center; justify-content: space-between; margin-top: 2px; }
.pane-pick span { padding-bottom: 2px; }
.gear { width: 64px; height: 39px; display: flex; align-items: center; justify-content: center; gap: 11px; background: #fdfdfd; border: 1px solid #ababab; }
.pane-search { display: flex; align-items: center; height: 28px; margin-top: 21px; background: #fff; border: 1px solid #ababab; }
.pane-search input { flex: 1; padding: 0 0 2px 2px; }
.pane-search input::placeholder { color: #666; }
.fields { margin-top: 27px; padding-left: 2px; height: 382px; background: #fdfdfd; }
.fields label { display: flex; align-items: center; gap: 8px; height: 30px; margin-top: -3px; margin-bottom: 3px; }
.fields label:first-child { margin-top: -4px; padding-top: 2px; }
.fields .on { font-weight: 700; }
.fields a { display: block; margin-top: 15px; }
input[type=checkbox] { appearance: none; width: 20px; height: 20px; border: 1px solid #777; background: #fff; flex: none; position: relative; }
input[type=checkbox]:checked::after { content: ""; position: absolute; left: 6px; top: 1px; width: 5px; height: 11px; border: solid #666; border-width: 0 2px 2px 0; transform: rotate(40deg); }
.drag-hint { padding-left: 5px; margin-top: 28px; }
.areas { margin: 28px 0 0 4px; display: grid; grid-template-columns: 241px 1fr; }
.area { height: 201px; padding-right: 9px; }
.area.right { border-left: 1px solid #ababab; padding: 0 0 0 3px; }
.area.lower { border-top: 1px solid #ababab; height: 202px; padding-top: 9px; }
.area h3 { display: flex; align-items: center; gap: 9px; height: 32px; padding: 0 0 6px 5px; font-size: 18px; line-height: 24px; }
.area.right h3 { gap: 11px; padding-left: 7px; }
.drop { position: relative; height: 160px; background: #fdfdfd; padding: 3px 1px; }
.drop select { appearance: none; width: 100%; height: 35px; padding: 0 11px; border: 1px solid #ababab; background: #fdfdfd; }
.drop:has(select)::after { content: ""; position: absolute; right: 17px; top: 18px; border: 6px solid transparent; border-top: 6px solid #333; border-bottom: 0; }
.defer { display: flex; margin: 29px 0 0 8px; align-items: center; justify-content: space-between; height: 40px; }
.defer label { display: flex; align-items: center; gap: 9px; }
.defer input { border: 1px solid #ababab; border-width: 1px 1px 1px 2px; }
.defer button { width: 50px; height: 38px; background: #fdfdfd; border: 1px solid #ddd; }

/* status bar */
.status { height: 33px; flex: none; display: flex; align-items: center; background: #f5f5f5; border-top: 1px solid #fff; padding: 0 12px 2px 10px; }
.access { margin: 0 5px 0 30px; }
.views { display: flex; align-self: stretch; margin: 0 6px -2px auto; }
.views button { width: 60px; display: flex; align-items: center; justify-content: center; }
.views .sel { background: #e0e0e0; }
.zoom-sign { width: 14px; text-align: center; }
.zoom { appearance: none; width: 148px; height: 2px; margin: 0 10px; background: #666; }
.zoom::-webkit-slider-thumb { appearance: none; width: 8px; height: 17px; background: #666; }
.pct { margin-left: 9px; font-size: 20px; }

/* insert-chart dialog window */
.dialog { position: absolute; left: 964px; top: 401px; width: 954px; height: 901px; display: flex; flex-direction: column; background: #efefef; border: 2px solid #a9a9a9; border-radius: 12px; box-shadow: 0 32px 64px rgba(0,0,0,.42), 0 0 24px rgba(0,0,0,.12); color: #000; overflow: hidden; }
.dlg-title { display: flex; align-items: center; height: 42px; padding: 0 27px 2px 11px; background: #fff; flex: none; }
.help { margin: 0 57px 0 auto; font-size: 20px; }
.dlg-tab { padding: 18px 0 0 10px; height: 50px; flex: none; }
.dlg-tab button { height: 32px; width: 86px; padding-bottom: 6px; border: 1px solid #e3e3e3; background: #f9f9f9; outline: 1px dotted #000; outline-offset: -4px; line-height: 24px; }
.dlg-body { margin: 0 11px 0 10px; height: 748px; flex: none; display: flex; background: #f9f9f9; border: 1px solid #e3e3e3; padding: 17px; }
.kinds { width: 142px; list-style: none; background: #fff; color: #666; }
.kinds li { display: flex; align-items: center; height: 36px; gap: 17px; padding-left: 5px; white-space: nowrap; }
.kinds svg { width: 24px; height: 24px; }
.kinds li.sel, .subtypes .sel { background: #9fd5b7; }
.k, .l, .gl { fill: none; stroke: #3b3a39; stroke-width: 2px; }
.kinds circle { fill: #333; }
.kinds .dot { fill: #2b88d8; }
.l, .kinds circle.l { fill: none; stroke: #2b88d8; }
.gl { stroke: #999; }
.w, .kinds circle.w { fill: #fafafa; stroke: #3b3a39; stroke-width: 2px; }
.kinds circle.k { fill: none; }
.b { fill: #83beec; stroke: #0063b1; stroke-width: 2px; }
.bl { fill: #83beec; stroke: #2b88d8; stroke-width: 1px; }
.g { fill: #c8c6c4; stroke: #797774; stroke-width: 2px; }
.detail { flex: 1; margin-left: 17px; padding-left: 17px; display: flex; flex-direction: column; border-left: 1px solid #c8c8c8; }
.subtypes { display: flex; height: 94px; border-bottom: 1px solid #c8c8c8; flex: none; }
.subtypes button { width: 84px; height: 84px; background: #fff; }
.detail h3 { font-size: 26px; line-height: 36px; padding: 9px 0 8px; }
.preview { width: 338px; flex: 1; background: #fff; }
.chart { width: 338px; height: 207px; border: 6px solid #9fd5b7; font-size: 8px; fill: #555; }
.axis { text-anchor: end; }
.cats { text-anchor: middle; }
.dlg-actions { display: flex; justify-content: flex-end; gap: 16px; padding: 8px 10px; }
.dlg-actions button { width: 111px; height: 36px; background: #fdfdfd; border: 1px solid #c8c8c8; border-radius: 4px; }
.dlg-actions .ok { border-color: #0078d4; }
.grip { position: absolute; right: 2px; bottom: 1px; width: 12px; height: 12px; }

/* floating widgets and callouts */
.netspeed { position: absolute; right: 234px; top: 244px; height: 80px; display: flex; align-items: center; }
.rates { width: 122px; height: 60px; margin-right: -39px; padding: 9px 0 0 18px; background: #fff; border-radius: 30px; box-shadow: 0 2px 10px rgba(0,0,0,.25); font-size: 14px; line-height: 21px; color: #666; }
.rates span { display: flex; align-items: center; gap: 3px; }
.ball { position: relative; width: 80px; height: 80px; border-radius: 50%; background: #fff; box-shadow: 0 2px 8px rgba(0,0,0,.15); display: flex; align-items: baseline; justify-content: center; padding-top: 17px; color: #000; }
.ball svg { position: absolute; inset: 0; }
.ball b { font-size: 32px; line-height: 44px; font-weight: 400; }
.ball small { font-size: 14px; }
.ime { position: absolute; right: -8px; bottom: 33px; width: 260px; height: 43px; display: flex; align-items: center; justify-content: space-between; padding: 0 16px 0 6px; background: #fff; border: 1px solid #c8c8c8; color: #4f7cff; }
.ime svg { width: 24px; height: 24px; }
.ime svg:first-child { width: 34px; height: 34px; }
.ime b { font-size: 25px; }
.ifly { font: 700 12px "Noto Sans CJK SC", sans-serif; fill: #4f7cff; text-anchor: middle; }
.marks { position: absolute; left: 0; top: 0; width: 2560px; height: 1530px; pointer-events: none; }
.note { position: absolute; color: #fd3838; font-size: 24px; line-height: 36px; white-space: nowrap; }
.one { left: 879px; top: 43px; }
.two { left: 1454px; top: 424px; }
.watermark { position: absolute; right: 14px; bottom: 3px; font-size: 14px; color: #999; }
```
FILE: script.js
```js
const widths = [43, 104, 104, 104, 104, 104, 130, 105, 50, 58, 51, 107, 78, 50, 109, 57, 104, 104, 104, 104, 104, 104, 0];
const letters = 'ABCDEFGHIJKLMNOPQRSTU'.split('').concat('');
const purchases = [
  ['1月1日', '妈妈', '油费', '74.00'], ['1月15日', '妈妈', '食品', '235.00'], ['1月17日', '爸爸', '运动', '20.00'],
  ['1月21日', '康霓', '书籍', '125.00'], ['2月2日', '妈妈', '食品', '235.00'], ['2月20日', '康霓', '音乐', '20.00'], ['2月25日', '康霓', '门票', '125.00']
];
const cells = {};
const put = (ref, html, cls = '') => { cells[ref] = { html, cls }; };
['日期', '购买者', '类型', '金额'].forEach((t, i) => put('ABCD'[i] + 1, t, 'head'));
purchases.forEach(([day, who, kind, sum], i) => {
  const r = i + 2, c = 'green' + (i % 2 ? '' : ' band');
  put('A' + r, day, c + ' num');
  put('B' + r, who, c);
  put('C' + r, kind, c);
  put('D' + r, `<span class="money"><span>¥</span><span>${sum}</span></span>` + (r === 8 ? '<i class="fill-mark"></i>' : ''), c);
});
put('F2', '求和项:金额<i class="select-box"></i>', 'blue');
put('G2', '列标签<i class="drop-btn"></i>', 'blue');
put('H2', '', 'blue'); put('I2', '', 'blue');
put('F3', '行标签<i class="drop-btn"></i>', 'blue rule');
put('G3', '1月', 'blue rule'); put('H3', '2月', 'blue rule'); put('I3', '总计', 'blue rule');
[['爸爸', 20, '', 20], ['康霓', 125, 145, 270], ['妈妈', 309, 235, 544]].forEach((row, i) =>
  row.forEach((v, j) => put('FGHI'[j] + (i + 4), v, 'blank' + (j ? ' num' : '') + (i === 2 ? ' rule' : ''))));
['总计', 454, 380, 834].forEach((v, j) => put('FGHI'[j] + 7, v, 'blue' + (j ? ' num strong' : '')));

let html = '<colgroup>' + widths.map(w => w ? `<col style="width:${w}px">` : '<col>').join('') + '</colgroup><thead><tr><th><div class="corner"></div></th>';
html += letters.map(l => `<th${l === 'F' ? ' class="here"' : ''}>${l}</th>`).join('') + '</tr></thead><tbody>';
for (let r = 1; r <= 37; r++) {
  html += `<tr${r < 9 ? ' class="tall"' : ''}><th${r === 2 ? ' class="here"' : ''}>${r}</th>`;
  html += letters.map(l => { const c = cells[l + r]; return c ? `<td class="${c.cls}">${c.html}</td>` : '<td></td>'; }).join('') + '</tr>';
}
document.getElementById('grid').innerHTML = html + '</tbody>';
```
